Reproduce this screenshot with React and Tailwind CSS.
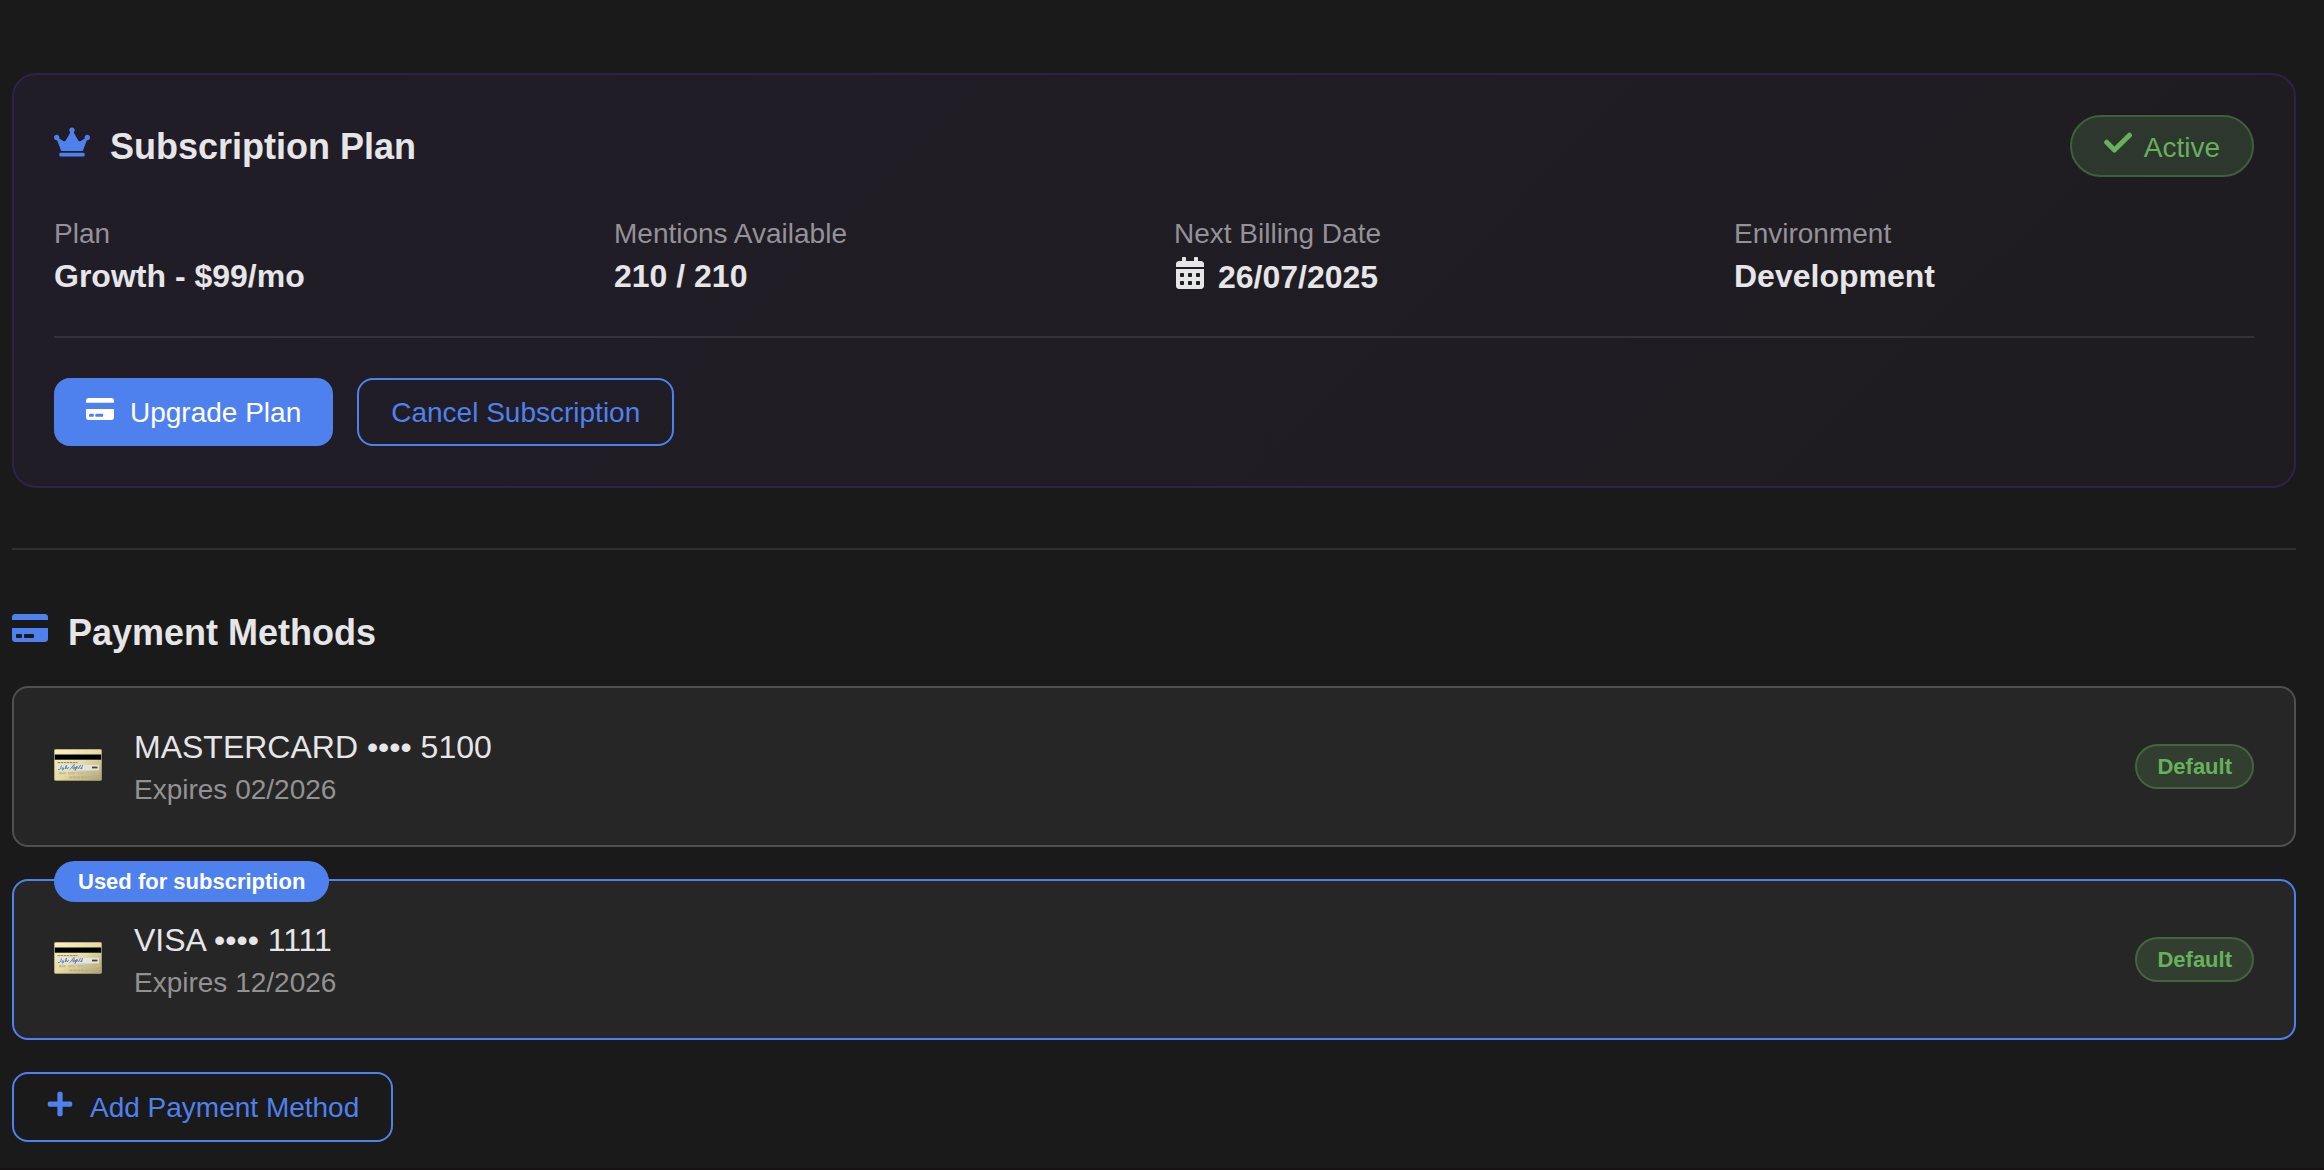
import React from "react";
import { FaCalendarAlt, FaCreditCard, FaCrown, FaPlus } from "react-icons/fa";

const details = [
  { label: "Plan", value: "Growth - $99/mo" },
  { label: "Mentions Available", value: "210 / 210" },
  { label: "Next Billing Date", value: "26/07/2025", calendar: true },
  { label: "Environment", value: "Development" },
];

const methods = [
  { name: "MASTERCARD •••• 5100", expires: "Expires 02/2026", used: false },
  { name: "VISA •••• 1111", expires: "Expires 12/2026", used: true },
];

function CheckMark() {
  return (
    <svg viewBox="0 0 28 28" className="size-7 shrink-0" fill="none" stroke="currentColor" strokeWidth="5" strokeLinecap="round" strokeLinejoin="round">
      <path d="M2.700 13.200l7.700 7.800L25.400 6.200" />
    </svg>
  );
}

function BankCard() {
  return (
    <svg viewBox="0 0 48 32" className="mb-[3px] h-8 w-12 shrink-0">
      <defs>
        <linearGradient id="gold" x1="0" y1="0" x2="1" y2="1">
          <stop offset="0" stopColor="#fbf3c0" />
          <stop offset="0.5" stopColor="#e6dca4" />
          <stop offset="1" stopColor="#aaa075" />
        </linearGradient>
      </defs>
      <rect x="0.3" y="0.3" width="47.4" height="31.2" rx="1.5" fill="url(#gold)" stroke="#b3a97c" strokeWidth="0.6" />
      <rect x="0.8" y="5.5" width="46.4" height="5.2" fill="#000" />
      <path d="M3.5 13.6h20" stroke="#8a8366" strokeWidth="1" strokeDasharray="2.5 0.6" />
      <rect x="3" y="15.8" width="42" height="5.6" fill="#e3e3e0" />
      <path
        d="M4 20.5c2 .5 3-1 3.4-4M8 20c0-2 2-2 1.600 0s-2 1-1.200-.6M11 20l1.500-4-1 4c1-2 2-2 1.800 0l1.500-1.800M16 20.500l4-5v5M18 19h3l1.500-1.500-1.500 4 2-4c1 0 1 2-.5 2.200M24.500 20l2-4M26.500 20c0-2 2-1.500 1 0M28.500 16l-1 4"
        fill="none"
        stroke="#5a7ab5"
        strokeWidth="0.9"
      />
      <path d="M38 18.500h5.500" stroke="#45453f" strokeWidth="1.800" />
      <path d="M5 24.200h40" stroke="#c6bd92" strokeWidth="2" strokeDasharray="7 2" />
      <path d="M15.500 28.300h29.500" stroke="#b9b086" strokeWidth="1.800" strokeDasharray="3 0.8" />
    </svg>
  );
}

function SectionTitle({ icon: Icon, children }) {
  return (
    <h2 className="flex h-[46px] items-baseline gap-5 pt-px text-[36px] leading-[45px] font-bold">
      <Icon className="-mt-2 translate-y-px text-[#4f81ee]" />
      {children}
    </h2>
  );
}

function SubscriptionCard() {
  return (
    <section className="h-[415px] rounded-3xl border-2 border-[#2d234a] bg-linear-[135deg,#211d28,#1e1c20] px-10 pt-10">
      <header className="flex h-[62px] items-center justify-between">
        <SectionTitle icon={FaCrown}>Subscription Plan</SectionTitle>
        <span className="flex h-[62px] items-center rounded-full border-2 border-[#3e5f3c] bg-[#2d372e] px-8 pt-[3px] text-[28px] leading-[41px] text-[#67b05c]">
          <span className="flex items-baseline gap-3">
            <CheckMark />
            Active
          </span>
        </span>
      </header>
      <dl className="mt-[35px] grid grid-cols-4 gap-x-10">
        {details.map((item) => (
          <div key={item.label}>
            <dt className="h-[43px] text-[28px] leading-[43px] text-[#949298]">{item.label}</dt>
            <dd className="h-[42px] text-[32px] leading-[42px] font-bold">
              {item.calendar ? (
                <span className="flex items-baseline gap-3 pt-px">
                  <FaCalendarAlt className="-mt-1 translate-y-px" />
                  {item.value}
                </span>
              ) : (
                item.value
              )}
            </dd>
          </div>
        ))}
      </dl>
      <div className="mt-[39px] flex gap-6 border-t-2 border-[#343139] pt-10 text-[28px] leading-[41px]">
        <button className="flex h-[68px] items-center rounded-2xl bg-[#4f81ee] px-8 pt-px text-white">
          <span className="flex items-baseline gap-4">
            <FaCreditCard className="translate-y-px" />
            Upgrade Plan
          </span>
        </button>
        <button className="flex h-[68px] items-center rounded-2xl border-2 border-[#4f81ee] px-8 pt-px text-[#4f81ee]">
          Cancel Subscription
        </button>
      </div>
    </section>
  );
}

function MethodCard({ method }) {
  return (
    <li
      className={
        method.used
          ? "relative flex h-[161px] items-center rounded-2xl border-2 border-[#4f81ee] bg-[#262626] px-10"
          : "relative flex h-[161px] items-center rounded-2xl border-2 border-[#505050] bg-[#262626] px-10"
      }
    >
      {method.used && (
        <span className="absolute -top-5 left-10 flex h-[41px] items-center rounded-full bg-[#4f81ee] px-6 text-[22px] font-bold text-white">
          Used for subscription
        </span>
      )}
      <BankCard />
      <div className="ml-8 grow pt-[2px]">
        <p className="text-[32px] leading-[44px]">{method.name}</p>
        <p className="text-[28px] leading-[41px] text-[#929292]">{method.expires}</p>
      </div>
      <span className="flex h-[45px] items-center rounded-full border-2 border-[#43643e] bg-[#323f30] px-5 text-[22px] font-bold text-[#67b05c]">
        Default
      </span>
    </li>
  );
}

export default function App() {
  return (
    <main className="h-[1170px] overflow-hidden border-b-2 border-[#161214] bg-[#1a1a1a] pt-[73px] pr-7 pl-3 font-['Liberation_Sans',Arial,sans-serif] text-[#e6e5e8]">
      <SubscriptionCard />
      <hr className="mt-[60px] border-t-2 border-[#303030]" />
      <section className="pt-[59px]">
        <SectionTitle icon={FaCreditCard}>Payment Methods</SectionTitle>
        <ul className="mt-[31px] flex flex-col gap-8">
          {methods.map((method) => (
            <MethodCard key={method.name} method={method} />
          ))}
        </ul>
        <button className="mt-8 flex h-[70px] items-center rounded-2xl border-2 border-[#4f81ee] px-8 pt-px text-[28px] leading-[41px] text-[#4f81ee]">
          <span className="flex items-baseline gap-4">
            <FaPlus className="translate-y-px" />
            Add Payment Method
          </span>
        </button>
      </section>
    </main>
  );
}
